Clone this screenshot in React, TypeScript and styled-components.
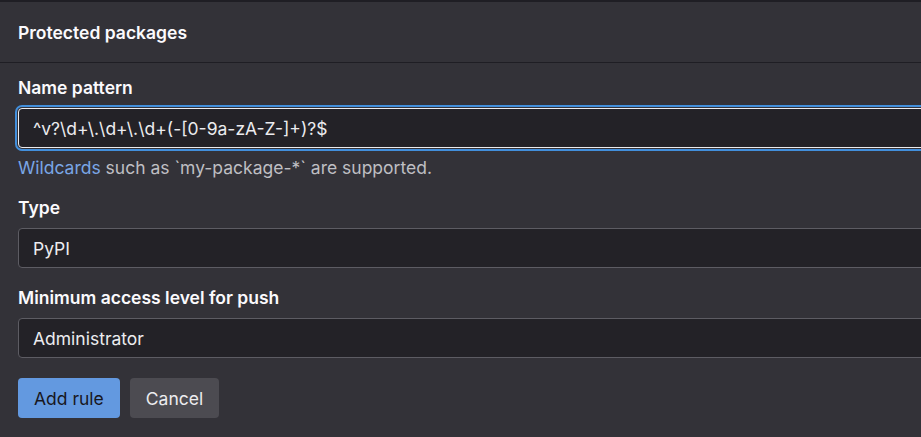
import React from 'react';
import styled, { createGlobalStyle } from 'styled-components';

const GlobalStyle = createGlobalStyle`
  html, body {
    margin: 0;
    padding: 0;
    background: #333238;
    overflow: hidden;
  }
  body {
    font-family: Inter, "Noto Sans", sans-serif;
    color: #ececef;
  }
`;

const TopStrip = styled.div`
  height: 2px;
  background: #1f1e24;
`;

const Viewport = styled.div`
  width: 100%;
  overflow: hidden;
`;

const Card = styled.section`
  width: 1000px;
  background: #333238;
`;

const CardHeader = styled.header`
  height: 60px;
  display: flex;
  align-items: center;
  padding: 0 18px;
  border-bottom: 1px solid #1f1e24;
`;

const Title = styled.h2`
  margin: 0;
  font-size: 17.5px;
  font-weight: 600;
  color: #fbfafd;
`;

const CardBody = styled.form`
  padding: 15px 0 0 18px;
`;

const FormGroup = styled.div<{ $gap?: number }>`
  margin-bottom: ${(p) => p.$gap ?? 20}px;
`;

const Label = styled.label`
  display: block;
  font-size: 17.5px;
  line-height: 20px;
  font-weight: 600;
  color: #fbfafd;
  margin-bottom: 10px;
`;

const TextInput = styled.input<{ $focused?: boolean }>`
  box-sizing: border-box;
  display: block;
  width: 100%;
  height: 40px;
  padding: 0 14px;
  font-family: inherit;
  font-size: 17.5px;
  color: #ececef;
  background: #232227;
  border: 1px solid ${(p) => (p.$focused ? '#ececef' : '#5d5c63')};
  border-radius: 4px;
  outline: none;
  box-shadow: ${(p) =>
    p.$focused ? '0 0 0 1px #333238, 0 0 0 3px #428fdc' : 'none'};
`;

const SelectBox = styled.div`
  box-sizing: border-box;
  display: flex;
  align-items: center;
  width: 100%;
  height: 40px;
  padding: 0 14px;
  font-size: 17.5px;
  color: #ececef;
  background: #232227;
  border: 1px solid #5d5c63;
  border-radius: 4px;
`;

const HelpText = styled.p`
  margin: 10px 0 0;
  font-size: 17.5px;
  line-height: 20px;
  color: #bfbfc3;
`;

const HelpLink = styled.a`
  color: #7aa6e6;
  text-decoration: none;
`;

const Actions = styled.div`
  display: flex;
  gap: 10px;
`;

const Button = styled.button<{ $variant: 'confirm' | 'default' }>`
  height: 40px;
  padding: 0 16px;
  border: none;
  border-radius: 4px;
  font-family: inherit;
  font-size: 17.5px;
  cursor: pointer;
  background: ${(p) => (p.$variant === 'confirm' ? '#6399e0' : '#4c4b51')};
  color: ${(p) => (p.$variant === 'confirm' ? '#18171d' : '#ececef')};
`;

export default function App() {
  return (
    <>
      <GlobalStyle />
      <TopStrip />
      <Viewport>
        <Card>
          <CardHeader>
            <Title>Protected packages</Title>
          </CardHeader>
          <CardBody onSubmit={(e) => e.preventDefault()}>
            <FormGroup $gap={20}>
              <Label>Name pattern</Label>
              <TextInput
                $focused
                readOnly
                value={'^v?\\d+\\.\\d+\\.\\d+(-[0-9a-zA-Z-]+)?$'}
              />
              <HelpText>
                <HelpLink href="#">Wildcards</HelpLink> such as `my-package-*`
                are supported.
              </HelpText>
            </FormGroup>
            <FormGroup>
              <Label>Type</Label>
              <SelectBox>PyPI</SelectBox>
            </FormGroup>
            <FormGroup>
              <Label>Minimum access level for push</Label>
              <SelectBox>Administrator</SelectBox>
            </FormGroup>
            <Actions>
              <Button type="submit" $variant="confirm">
                Add rule
              </Button>
              <Button type="button" $variant="default">
                Cancel
              </Button>
            </Actions>
          </CardBody>
        </Card>
      </Viewport>
    </>
  );
}
